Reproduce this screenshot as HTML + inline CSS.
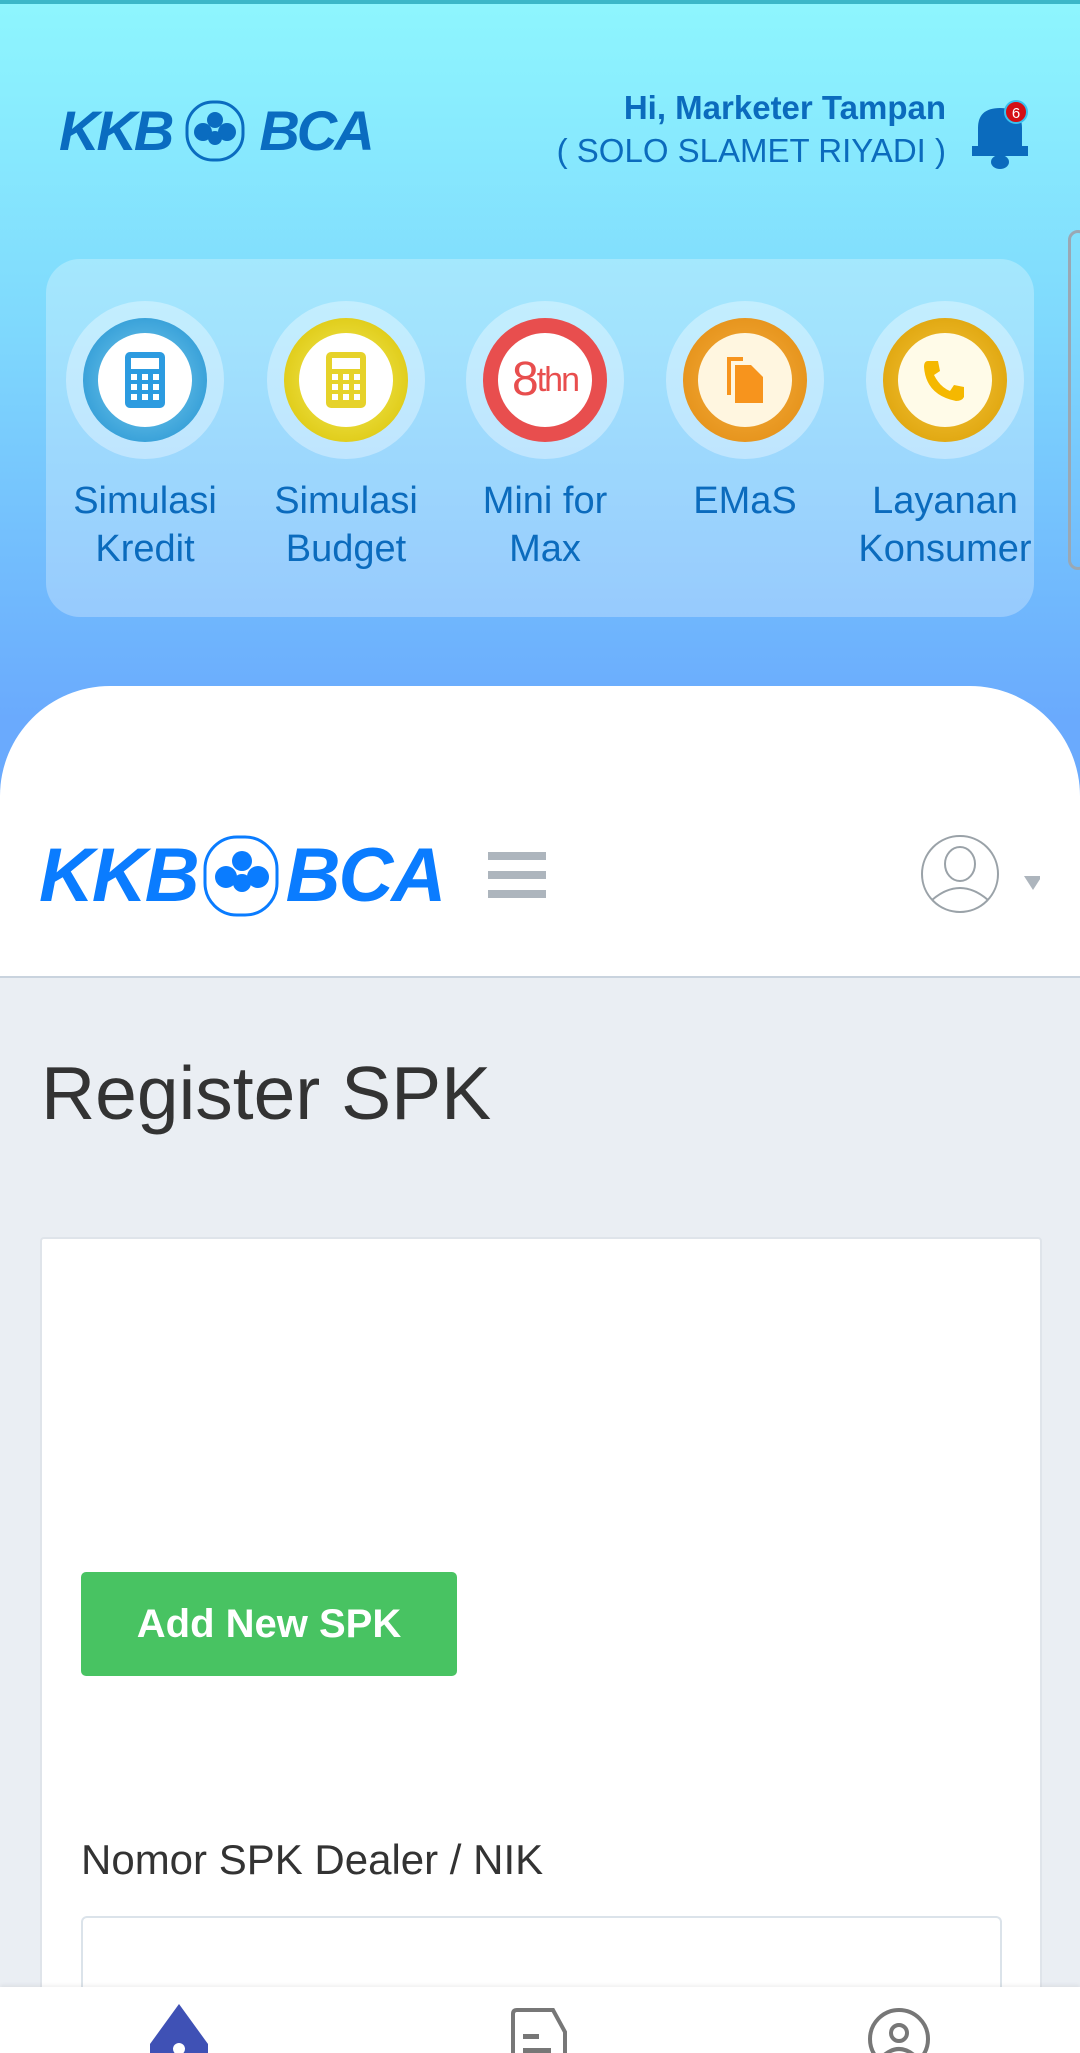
<!DOCTYPE html>
<html><head><meta charset="utf-8"><style>
*{margin:0;padding:0;box-sizing:border-box}
html,body{width:1080px;height:2053px;overflow:hidden}
body{position:relative;font-family:"Liberation Sans",sans-serif;background:#eaeef3}
.top{position:absolute;left:0;top:0;width:1080px;height:900px;background:linear-gradient(#8ef6fe 0%,#7fd9fd 36%,#6aaafd 80%,#6aaafd 100%)}
.bar{position:absolute;left:0;top:0;width:1080px;height:4px;background:#3bb7c8}
.logo{position:absolute;display:flex;align-items:center;font-weight:bold;font-style:italic;letter-spacing:-2px}
.hi{position:absolute;right:134px;top:86px;text-align:right;color:#0b6bbd;font-size:33px;line-height:43px}
.panel{position:absolute;left:46px;top:259px;width:988px;height:358px;border-radius:34px;background:rgba(255,255,255,.28)}
.item{position:absolute;top:301px;width:200px;text-align:center;color:#0b6bbd;font-size:38px;line-height:48px;white-space:nowrap}
.halo{width:158px;height:158px;border-radius:50%;background:rgba(255,255,255,.35);margin:0 auto;position:relative}
.ring{position:absolute;left:17px;top:17px;width:124px;height:124px;border-radius:50%}
.inner{position:absolute;left:15px;top:15px;width:94px;height:94px;border-radius:50%;background:#fff;display:flex;align-items:center;justify-content:center}
.lbl{margin-top:18px}
.sheet{position:absolute;left:0;top:686px;width:1080px;height:292px;background:#fff;border-radius:110px 110px 0 0;border-bottom:2px solid #c9d3de}
.card{position:absolute;left:40px;top:1237px;width:1002px;height:816px;background:#fff;border:2px solid #dfe4ea;border-radius:4px}
.nav{position:absolute;left:0;top:1987px;width:1080px;height:66px;background:#fff;box-shadow:0 -2px 4px rgba(0,0,0,.06)}
</style></head><body>
<div class="top"></div><div class="bar"></div>
<div class="logo" style="left:59px;top:98px;color:#0a6cc0;font-size:56px;letter-spacing:-3px">KKB<svg width="84" height="62" viewBox="0 0 84 62" style="margin:0 2px"><rect x="14" y="2" width="56" height="58" rx="26" fill="none" stroke="#0a6cc0" stroke-width="3"/><circle cx="42" cy="20" r="8" fill="#0a6cc0"/><circle cx="30" cy="32" r="9" fill="#0a6cc0"/><circle cx="54" cy="32" r="9" fill="#0a6cc0"/><circle cx="42" cy="38" r="7" fill="#0a6cc0"/></svg>BCA</div>
<div class="hi"><b style="font-weight:600">Hi, Marketer Tampan</b><br>( SOLO SLAMET RIYADI )</div>
<svg style="position:absolute;left:968px;top:100px" width="64" height="72" viewBox="0 0 64 72"><path d="M10 50 L10 28 Q10 8 32 8 Q54 8 54 28 L54 50 Z" fill="#0b6bbd"/><rect x="4" y="46" width="56" height="10" fill="#0b6bbd"/><ellipse cx="32" cy="62" rx="9" ry="7" fill="#0b6bbd"/><circle cx="48" cy="12" r="11" fill="#d40f14" stroke="#38c0f0" stroke-width="2"/><text x="48" y="18" font-size="15" fill="#fff" text-anchor="middle" font-family="Liberation Sans">6</text></svg>
<div style="position:absolute;left:1068px;top:230px;width:20px;height:340px;border:3px solid #9aa8b4;border-radius:10px"></div>
<div class="panel"></div>
<div class="item" style="left:45px"><div class="halo"><div class="ring" style="background:radial-gradient(#7fd0f0,#1e8fd0)"><div class="inner"><svg width="40" height="56"><rect width="40" height="56" rx="5" fill="#2c9be0"/><rect x="6" y="6" width="28" height="11" fill="#fff"/><g fill="#fff"><rect x="6" y="22" width="6" height="6"/><rect x="17" y="22" width="6" height="6"/><rect x="28" y="22" width="6" height="6"/><rect x="6" y="32" width="6" height="6"/><rect x="17" y="32" width="6" height="6"/><rect x="28" y="32" width="6" height="6"/><rect x="6" y="42" width="6" height="6"/><rect x="17" y="42" width="6" height="6"/><rect x="28" y="42" width="6" height="6"/></g></svg></div></div></div><div class="lbl">Simulasi<br>Kredit</div></div>
<div class="item" style="left:246px"><div class="halo"><div class="ring" style="background:radial-gradient(#f6ee60,#d8c000)"><div class="inner"><svg width="40" height="56"><rect width="40" height="56" rx="5" fill="#e6d22a"/><rect x="6" y="6" width="28" height="11" fill="#fff"/><g fill="#fff"><rect x="6" y="22" width="6" height="6"/><rect x="17" y="22" width="6" height="6"/><rect x="28" y="22" width="6" height="6"/><rect x="6" y="32" width="6" height="6"/><rect x="17" y="32" width="6" height="6"/><rect x="28" y="32" width="6" height="6"/><rect x="6" y="42" width="6" height="6"/><rect x="17" y="42" width="6" height="6"/><rect x="28" y="42" width="6" height="6"/></g></svg></div></div></div><div class="lbl">Simulasi<br>Budget</div></div>
<div class="item" style="left:445px"><div class="halo"><div class="ring" style="background:#e84e4e"><div class="inner" style="color:#e84e4e;font-size:34px;letter-spacing:-2px"><span style="font-size:48px">8</span>thn</div></div></div><div class="lbl">Mini for<br>Max</div></div>
<div class="item" style="left:645px"><div class="halo"><div class="ring" style="background:radial-gradient(#f7b040,#e08a10)"><div class="inner" style="background:#fff6e0"><svg width="40" height="50"><path d="M2 2h16v4H6v34H2z" fill="#f7941d"/><path d="M10 10h16l12 12v26H10z" fill="#f7941d"/></svg></div></div></div><div class="lbl">EMaS</div></div>
<div class="item" style="left:845px"><div class="halo"><div class="ring" style="background:radial-gradient(#f8c840,#d89c00)"><div class="inner" style="background:#fffbe8"><svg width="46" height="46" viewBox="0 0 46 46"><path d="M6 4 L16 4 L18 14 L12 18 Q18 30 28 34 L32 28 L42 30 L42 40 Q40 44 34 44 Q4 38 2 10 Q2 4 6 4Z" fill="#f5b800"/></svg></div></div></div><div class="lbl">Layanan<br>Konsumer</div></div>
<div class="sheet"></div>
<div class="logo" style="left:39px;top:832px;color:#0a7cff;font-size:76px">KKB<svg width="84" height="82" viewBox="0 0 84 82" style="margin:0 2px"><rect x="5" y="2" width="72" height="78" rx="32" fill="none" stroke="#0a7cff" stroke-width="3"/><circle cx="42" cy="26" r="10" fill="#0a7cff"/><circle cx="26" cy="42" r="11" fill="#0a7cff"/><circle cx="58" cy="42" r="11" fill="#0a7cff"/><circle cx="42" cy="48" r="9" fill="#0a7cff"/></svg>BCA</div>
<div style="position:absolute;left:488px;top:852px;width:58px;height:46px;background:linear-gradient(#adb5bd 0 8px,transparent 8px 19px,#adb5bd 19px 27px,transparent 27px 38px,#adb5bd 38px 46px)"></div>
<svg style="position:absolute;left:920px;top:834px" width="120" height="82"><circle cx="40" cy="40" r="38" fill="none" stroke="#9aa2a8" stroke-width="2"/><ellipse cx="40" cy="30" rx="15" ry="17" fill="none" stroke="#9aa2a8" stroke-width="2"/><path d="M12 66 Q40 42 68 66" fill="none" stroke="#9aa2a8" stroke-width="2"/><path d="M104 42h18l-9 14z" fill="#adb5bd"/></svg>
<div style="position:absolute;left:41px;top:1050px;font-size:75px;color:#333">Register SPK</div>
<div class="card"></div>
<div style="position:absolute;left:81px;top:1572px;width:376px;height:104px;background:#48c362;border-radius:5px;color:#fff;font-size:40px;font-weight:bold;line-height:104px;text-align:center">Add New SPK</div>
<div style="position:absolute;left:81px;top:1836px;font-size:42px;color:#333">Nomor SPK Dealer / NIK</div>
<div style="position:absolute;left:81px;top:1916px;width:921px;height:137px;border:2px solid #dbe3ea;border-bottom:none;border-radius:6px 6px 0 0;background:#fff"></div>
<div class="nav"></div>
<svg style="position:absolute;left:148px;top:2004px" width="62" height="49"><path d="M31 0 L60 40 V49 H2 V40 Z" fill="#3f51b5"/><circle cx="31" cy="45" r="6" fill="#fff"/></svg>
<svg style="position:absolute;left:510px;top:2008px" width="58" height="45"><path d="M3 45V6Q3 2 7 2H43L55 24V45" fill="none" stroke="#777" stroke-width="4"/><rect x="13" y="26" width="16" height="5" fill="#777"/><rect x="13" y="40" width="28" height="5" fill="#777"/></svg>
<svg style="position:absolute;left:866px;top:2006px" width="66" height="47"><circle cx="33" cy="33" r="29" fill="none" stroke="#777" stroke-width="4"/><circle cx="33" cy="27" r="8" fill="none" stroke="#777" stroke-width="4"/><path d="M17 50 Q33 36 49 50" fill="none" stroke="#777" stroke-width="4"/></svg>
</body></html>
